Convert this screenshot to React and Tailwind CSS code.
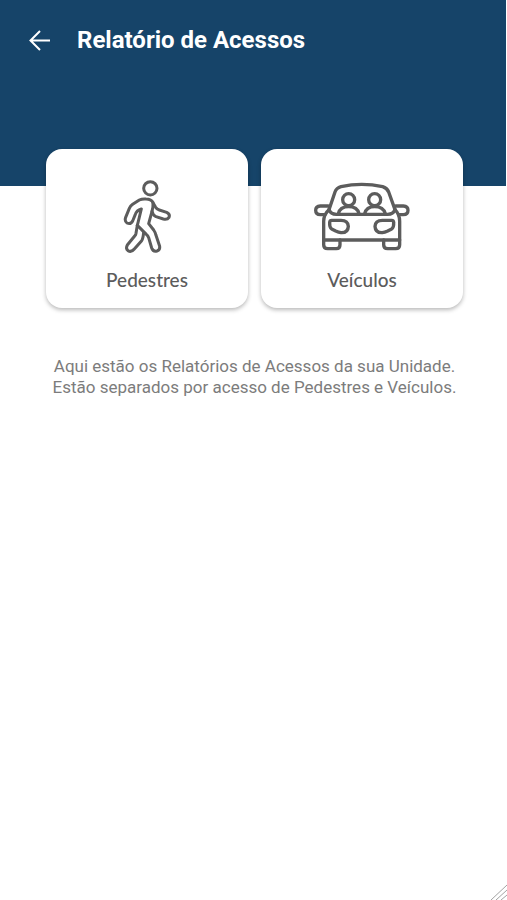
const PedestrianIcon = () => (
    <svg
        className="w-[50px] h-[76px]"
        viewBox="36 27 150 228"
        fill="none"
        stroke="currentColor"
        strokeWidth="9"
        strokeLinecap="round"
        strokeLinejoin="round"
        aria-hidden="true"
    >
        <circle cx="121" cy="55" r="20" />
        <path d="M82 166 L94 117 Q80 121 76 133 L68 153 Q62 164 51 159 Q43 154 47 142 L58 115 Q61 108 68 103 L88 90 Q96 86 108 87 Q124 87 129 98 L137 112 Q141 118 148 120 L170 127 Q181 132 177 142 Q172 150 160 147 L138 140 Q129 136 126 124" />
        <path d="M129 98 Q130 110 126 124 L116 161 L131 180 Q136 187 138 196 L149 229 Q151 240 141 243 Q129 246 125 234 L116 203 Q114 197 109 193 L82 166" />
        <path d="M82 166 L78 190 Q77 195 74 198 L52 225 Q46 235 54 242 Q64 248 73 237 L95 212 Q99 207 101 187" />
    </svg>
);

const CarIcon = () => (
    <svg
        className="w-[96px] h-[76px]"
        viewBox="27 27 288 228"
        fill="none"
        stroke="currentColor"
        strokeWidth="10"
        strokeLinecap="round"
        strokeLinejoin="round"
        aria-hidden="true"
    >
        <path d="M72 119 L90 66 Q94 54 108 50 Q170 36 233 50 Q246 54 251 66 L270 119" />
        <path d="M72 119 Q56 133 56 154 V224 Q56 236 68 236 H94 Q105 236 105 224 V210" />
        <path d="M270 119 Q284 133 284 154 V224 Q284 236 272 236 H248 Q236 236 236 224 V210" />
        <path d="M56 210 H284" />
        <path d="M72 119 Q77 133 94 133 H248 Q265 133 270 119" />
        <path d="M70 108 H46 Q32 109 32 121 Q32 134 46 134 H60" />
        <path d="M272 108 H295 Q309 109 309 121 Q309 134 295 134 H282" />
        <circle cx="131" cy="89" r="18" />
        <circle cx="209" cy="89" r="18" />
        <path d="M100 131 Q105 110 131 110 Q157 110 162 131" />
        <path d="M179 131 Q184 110 209 110 Q235 110 241 131" />
        <path d="M80 151 H108 Q129 151 130 169 Q129 189 108 188 Q101 187 92 183 L80 177 Q73 172 74 158 Q74 151 80 151 Z" />
        <path d="M260 151 H232 Q211 151 210 169 Q211 189 232 188 Q239 187 248 183 L260 177 Q267 172 266 158 Q266 151 260 151 Z" />
    </svg>
);

const reports = [
    { id: "pedestres", label: "Pedestres", icon: <PedestrianIcon /> },
    { id: "veiculos", label: "Veículos", icon: <CarIcon /> },
];

const App = () => {
    return (
        <div className="relative min-h-screen bg-white font-['Roboto',sans-serif]">
            <header className="mr-px flex h-[186px] items-start bg-[#164469] px-7 pt-6 text-white">
                <button type="button" aria-label="Voltar" className="flex h-8 w-6 items-center justify-center">
                    <svg
                        className="h-6 w-6"
                        viewBox="0 0 24 24"
                        fill="none"
                        stroke="currentColor"
                        strokeWidth="2"
                        aria-hidden="true"
                    >
                        <path d="M22 12.5H3M12 3L2.5 12.5L12 22" />
                    </svg>
                </button>
                <h1 className="ml-[25px] text-2xl font-bold">Relatório de Acessos</h1>
            </header>

            <main className="-mt-[37px] pr-[44px] pl-[46px]">
                <div className="grid grid-cols-2 gap-[13px]">
                    {reports.map((report) => (
                        <button
                            key={report.id}
                            type="button"
                            className="flex flex-col items-center gap-[13px] rounded-2xl bg-white pt-[30px] pb-4 text-[#5c5c5c] shadow-[0_2px_4px_rgba(0,0,0,0.28)]"
                        >
                            {report.icon}
                            <span className="font-['Lato',sans-serif] text-[19px] leading-6 font-medium">{report.label}</span>
                        </button>
                    ))}
                </div>
                <p className="mt-12 text-center text-[17px] leading-[21px] whitespace-pre-line text-[#7c7c7c]">
                    {"Aqui estão os Relatórios de Acessos da sua Unidade.\nEstão separados por acesso de Pedestres e Veículos."}
                </p>
            </main>

            <svg
                className="absolute right-0 bottom-0 h-4 w-4"
                viewBox="0 0 16 16"
                fill="none"
                stroke="#a3a3a3"
                aria-hidden="true"
            >
                <path d="M0 16L16 1M5 16L16 6M10 16L16 11" />
            </svg>
        </div>
    );
};

export default App;
